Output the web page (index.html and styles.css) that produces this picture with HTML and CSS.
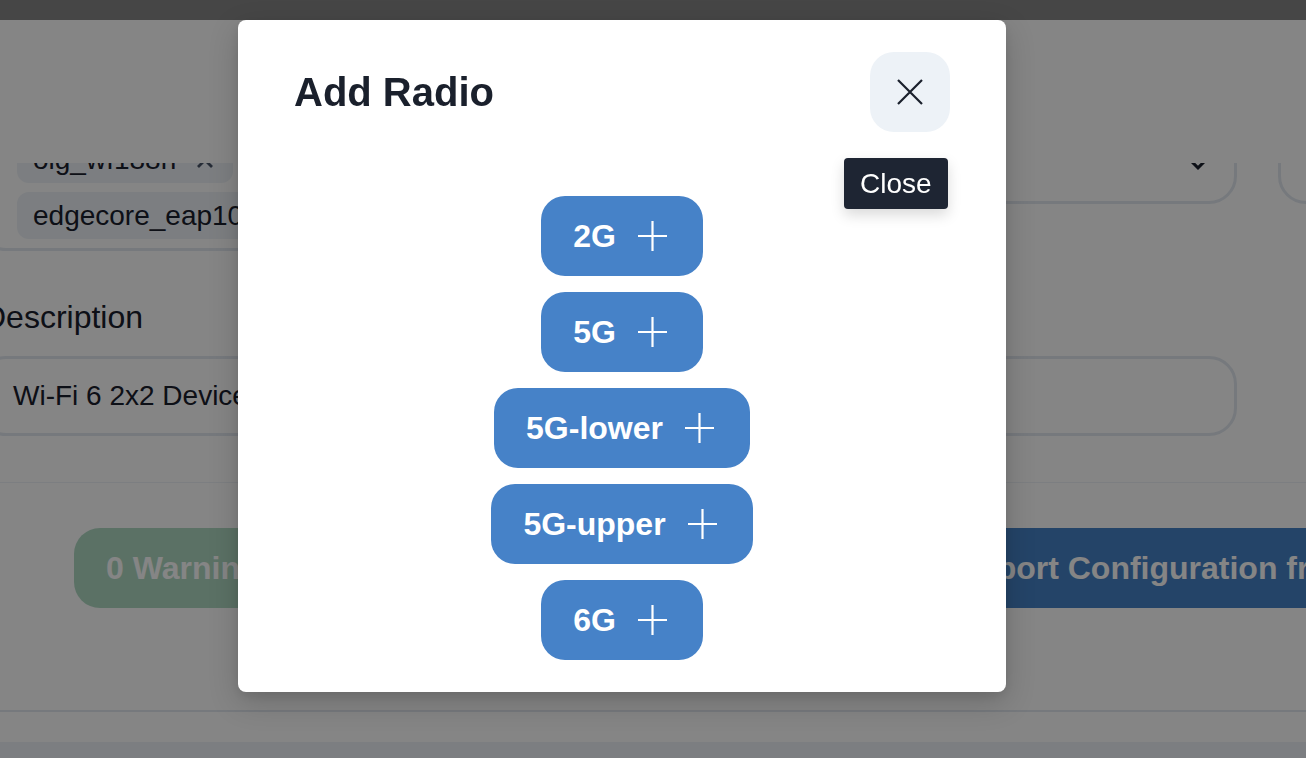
FILE: index.html
```html
<!DOCTYPE html>
<html lang="en">
<head>
<meta charset="utf-8">
<title>Add Radio</title>
<link rel="stylesheet" href="styles.css">
</head>
<body>
<div class="overlay"></div>
<section class="drawer">
  <header class="drawer-header"></header>
  <div class="drawer-body">
    <div class="drawer-content">
      <div class="row-top">
        <div class="main-col">
          <div class="multi">
            <span class="chip">oig_wf188n
              <svg class="chip-x" width="20" height="20" viewBox="0 0 20 20"><path d="M3 3L17 17M17 3L3 17"/></svg>
            </span>
            <span class="chip">edgecore_eap101
              <svg class="chip-x" width="20" height="20" viewBox="0 0 20 20"><path d="M3 3L17 17M17 3L3 17"/></svg>
            </span>
          </div>
          <div class="select">
            <svg class="chevron" width="36" height="36" viewBox="0 0 24 24"><path d="M16.59 8.59L12 13.17 7.41 8.59 6 10l6 6 6-6z"/></svg>
          </div>
        </div>
        <div class="side-field"></div>
      </div>
      <label class="field-label">Description</label>
      <div class="text-input">Wi-Fi 6 2x2 Device</div>
      <div class="divider"></div>
      <div class="actions">
        <button class="btn btn-green" disabled>0 Warnings</button>
        <button class="btn btn-blue">Import Configuration from File</button>
      </div>
    </div>
  </div>
  <footer class="drawer-footer"></footer>
  <div class="drawer-bottom"></div>
</section>
<div class="overlay overlay-front">
  <div class="modal">
    <div class="modal-header">
      <h2 class="modal-title">Add Radio</h2>
      <button class="close-btn" aria-label="Close">
        <svg width="26" height="26" viewBox="0 0 26 26"><path d="M1 1L25 25M25 1L1 25"/></svg>
      </button>
    </div>
    <div class="tooltip">Close</div>
    <div class="modal-body">
      <button class="radio-btn">2G <svg class="plus" width="29" height="30" viewBox="0 0 29 30"><path d="M14.5 0V30M0 15H29"/></svg></button>
      <button class="radio-btn">5G <svg class="plus" width="29" height="30" viewBox="0 0 29 30"><path d="M14.5 0V30M0 15H29"/></svg></button>
      <button class="radio-btn">5G-lower <svg class="plus" width="29" height="30" viewBox="0 0 29 30"><path d="M14.5 0V30M0 15H29"/></svg></button>
      <button class="radio-btn">5G-upper <svg class="plus" width="29" height="30" viewBox="0 0 29 30"><path d="M14.5 0V30M0 15H29"/></svg></button>
      <button class="radio-btn">6G <svg class="plus" width="29" height="30" viewBox="0 0 29 30"><path d="M14.5 0V30M0 15H29"/></svg></button>
    </div>
  </div>
</div>
</body>
</html>
```

FILE: styles.css
```css
* {
  box-sizing: border-box;
  margin: 0;
  padding: 0;
}

html,
body {
  width: 100%;
  height: 100%;
  overflow: hidden;
}

body {
  font-family: "Liberation Sans", Arial, Helvetica, sans-serif;
  background: #ffffff;
  color: #1a202c;
}

button {
  font-family: inherit;
  border: none;
  cursor: pointer;
}

.overlay {
  position: fixed;
  inset: 0;
  background: rgba(0, 0, 0, 0.48);
}

/* Underlying full-width modal */
.drawer {
  position: fixed;
  top: 20px;
  left: 0;
  right: 0;
  bottom: 0;
  background: #ffffff;
  display: flex;
  flex-direction: column;
  overflow: hidden;
}

.drawer-header {
  height: 143px;
  flex: none;
}

.drawer-body {
  flex: 1;
  overflow: hidden;
}

.drawer-content {
  margin: -39px 0 0 -22px;
  width: 1800px;
}

.row-top {
  display: flex;
  gap: 41px;
  align-items: flex-start;
}

.main-col {
  width: 1259px;
  display: flex;
  gap: 40px;
  align-items: flex-start;
}

.multi {
  width: 620px;
  border: 3px solid #e2e8f0;
  border-radius: 28px;
  padding: 9px 0 9px 36px;
  display: flex;
  flex-direction: column;
  align-items: flex-start;
  gap: 9px;
}

.chip {
  display: inline-flex;
  align-items: center;
  height: 47px;
  padding: 0 18px 0 16px;
  gap: 19px;
  background: #edf2f7;
  border-radius: 12px;
  font-size: 28px;
  white-space: nowrap;
}

.chip-x {
  stroke: #4a5568;
  stroke-width: 2.8;
  fill: none;
}

.select {
  flex: 1;
  height: 80px;
  border: 3px solid #e2e8f0;
  border-radius: 28px;
  display: flex;
  align-items: center;
  justify-content: flex-end;
  padding-right: 18px;
}

.chevron {
  fill: #1a202c;
}

.side-field {
  width: 400px;
  height: 80px;
  border: 3px solid #e2e8f0;
  border-radius: 28px;
}

.field-label {
  display: block;
  margin-top: 42px;
  padding-left: 5px;
  font-size: 32px;
  line-height: 48px;
}

.text-input {
  margin-top: 15px;
  width: 1259px;
  height: 80px;
  border: 3px solid #e2e8f0;
  border-radius: 28px;
  padding: 0 32px;
  display: flex;
  align-items: center;
  font-size: 28px;
}

.divider {
  margin-top: 46px;
  height: 1px;
  background: #edf2f7;
}

.actions {
  margin-top: 45px;
  display: flex;
  gap: 618px;
  padding-left: 96px;
}

.btn {
  height: 80px;
  padding: 0 32px;
  border-radius: 26px;
  font-size: 32px;
  font-weight: 700;
  color: #ffffff;
  white-space: nowrap;
}

.btn-green {
  background: #38a169;
  opacity: 0.4;
}

.btn-blue {
  background: #4682c8;
}

.drawer-footer {
  flex: none;
  height: 32px;
  border-top: 2px solid #e2e8f0;
}

.drawer-bottom {
  flex: none;
  height: 16px;
  background: #edf2f7;
}

/* Add Radio modal */
.overlay-front {
  display: flex;
  justify-content: center;
  align-items: flex-start;
  padding: 20px 62px 0 0;
}

.modal {
  position: relative;
  width: 768px;
  background: #ffffff;
  border-radius: 8px;
  padding: 32px 56px;
  box-shadow: 0 10px 30px rgba(0, 0, 0, 0.18), 0 4px 12px rgba(0, 0, 0, 0.08);
}

.modal-header {
  height: 80px;
  display: flex;
  justify-content: space-between;
  align-items: center;
}

.modal-title {
  font-size: 40px;
  font-weight: 700;
  line-height: 48px;
  color: #1a202c;
}

.close-btn {
  width: 80px;
  height: 80px;
  border-radius: 24px;
  background: #edf2f7;
  display: flex;
  align-items: center;
  justify-content: center;
}

.close-btn svg {
  stroke: #1a202c;
  stroke-width: 2.2;
  fill: none;
}

.tooltip {
  position: absolute;
  left: 606px;
  top: 138px;
  height: 51px;
  padding: 0 16px;
  line-height: 51px;
  font-size: 28px;
  color: #ffffff;
  background: #1e2533;
  border-radius: 4px;
  box-shadow: 0 6px 14px rgba(0, 0, 0, 0.15);
}

.modal-body {
  margin-top: 64px;
  display: flex;
  flex-direction: column;
  align-items: center;
  gap: 16px;
}

.radio-btn {
  display: inline-flex;
  align-items: center;
  gap: 22px;
  height: 80px;
  padding: 0 36px 0 32px;
  border-radius: 24px;
  background: #4682c8;
  color: #ffffff;
  font-size: 32px;
  font-weight: 700;
  white-space: nowrap;
}

.plus {
  stroke: #ffffff;
  stroke-width: 2.2;
  fill: none;
}
```
